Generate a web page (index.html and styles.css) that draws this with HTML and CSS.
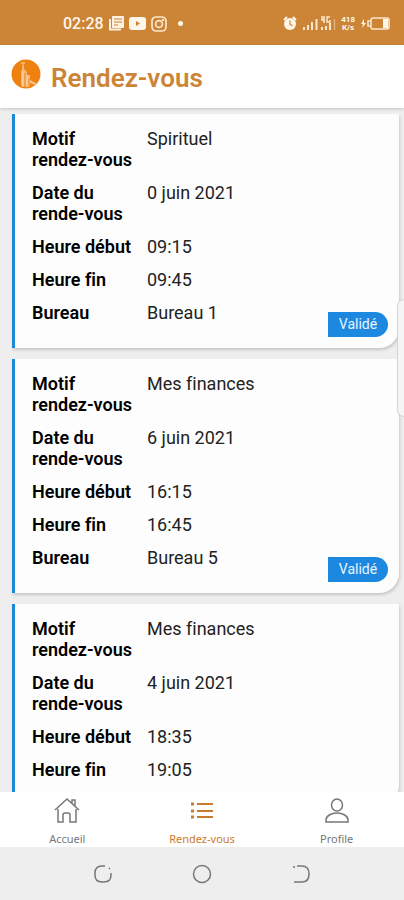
FILE: index.html
```
<!DOCTYPE html>
<html lang="fr">
<head>
<meta charset="utf-8">
<meta name="viewport" content="width=device-width, initial-scale=1">
<title>Rendez-vous</title>
<link rel="stylesheet" href="styles.css">
</head>
<body>
<div class="status-bar">
  <div class="status-group">
    <span class="clock">02:28</span>
    <svg width="15" height="15" viewBox="0 0 15 15" aria-hidden="true">
      <path d="M1 3v10.500h11" fill="none" stroke="#fff1df" stroke-width="2"/>
      <rect x="3" y="0" width="12" height="12" rx="1" fill="#fff1df"/>
      <path d="M5 3h8M5 6h8M5 9h4" stroke="#cc8436" stroke-width="1.200"/>
    </svg>
    <svg width="17" height="13" viewBox="0 0 17 13" aria-hidden="true">
      <rect width="17" height="13" rx="3" fill="#fff6ea"/>
      <path d="M7 4v5l4-2.500z" fill="#cc8436"/>
    </svg>
    <svg width="16" height="16" viewBox="0 0 16 16" fill="none" stroke="#fbe6cb" stroke-width="1.700" aria-hidden="true">
      <rect x="1" y="1" width="14" height="14" rx="4"/>
      <circle cx="8" cy="8" r="3.400"/>
      <circle cx="12" cy="4" r=".5"/>
    </svg>
    <span class="status-dot"></span>
  </div>
  <div class="status-group">
    <svg width="14" height="15" viewBox="0 0 14 15" aria-hidden="true">
      <circle cx="7" cy="8" r="6" fill="#fff6ea"/>
      <path d="M1 4l3-3M13 4l-3-3" stroke="#fff6ea" stroke-width="2"/>
      <path d="M7 4.500V8l2.500 2" fill="none" stroke="#cc8436" stroke-width="1.200"/>
    </svg>
    <svg width="34" height="18" viewBox="0 0 34 18" aria-hidden="true">
      <path d="M2 15v-3M6 15V10M10 15V7M14.500 15V4M20 15v-3M24 15v-4M28 15V8" stroke="#fbe6cb" stroke-width="2"/>
      <path d="M32.500 15V4" stroke="#e0b07a" stroke-width="1.500"/>
      <path d="M20 1v4h3M22 1v7M28 2h-3v5h3v-2" fill="none" stroke="#fbe6cb" stroke-width="1.500"/>
    </svg>
    <span class="net-speed"><span>418</span><span>K/s</span></span>
    <svg width="30" height="13" viewBox="0 0 30 13" aria-hidden="true">
      <path d="M4 2L1 7h2l-1 4 4-5H4z" fill="#fff6ea"/>
      <path d="M11 4H8v5h3" fill="none" stroke="#fbe6cb" stroke-width="1.500"/>
      <rect x="11" y="1" width="18" height="11" rx="2" fill="none" stroke="#fbe6cb" stroke-width="1.500"/>
      <rect x="23" y="2" width="5" height="9" fill="#fff6ea"/>
    </svg>
  </div>
</div>

<header class="app-header">
  <svg width="30" height="30" viewBox="0 0 30 30" aria-hidden="true">
    <circle cx="15" cy="15" r="14.500" fill="#ef8110"/>
    <path d="M10 27V13l1-3V7l1-4 1 4v3l3 3v3h3v5l6 4-1 1-5-2v4z" fill="#f4b778"/>
    <path d="M10 4h4M12 12v16M16 16v12M19 22l6 3" stroke="#fbd9ae" stroke-width="1"/>
    <path d="M14 14v14M18 20v8" stroke="#e98a2a" stroke-width="1"/>
  </svg>
  <h1>Rendez-vous</h1>
</header>

<main class="appointments">
  <article class="card">
    <dl class="details">
      <dt>Motif rendez-vous</dt><dd>Spirituel</dd>
      <dt>Date du rende-vous</dt><dd>0 juin 2021</dd>
      <dt>Heure début</dt><dd>09:15</dd>
      <dt>Heure fin</dt><dd>09:45</dd>
      <dt>Bureau</dt><dd>Bureau 1</dd>
    </dl>
    <span class="badge">Validé</span>
  </article>
  <article class="card">
    <dl class="details">
      <dt>Motif rendez-vous</dt><dd>Mes finances</dd>
      <dt>Date du rende-vous</dt><dd>6 juin 2021</dd>
      <dt>Heure début</dt><dd>16:15</dd>
      <dt>Heure fin</dt><dd>16:45</dd>
      <dt>Bureau</dt><dd>Bureau 5</dd>
    </dl>
    <span class="badge">Validé</span>
  </article>
  <article class="card">
    <dl class="details">
      <dt>Motif rendez-vous</dt><dd>Mes finances</dd>
      <dt>Date du rende-vous</dt><dd>4 juin 2021</dd>
      <dt>Heure début</dt><dd>18:35</dd>
      <dt>Heure fin</dt><dd>19:05</dd>
    </dl>
  </article>
</main>

<nav class="tab-bar">
  <a class="tab" href="#accueil">
    <svg width="28" height="28" viewBox="0 0 28 28" aria-hidden="true">
      <path d="M2 13L14 2l12 11M19 6V3h3v6M5 12v13h5v-7q0-2 2-2h3q2 0 2 2v7h6V12" stroke-width="1.500"/>
    </svg>
    <span>Accueil</span>
  </a>
  <a class="tab tab-active" href="#rendez-vous" aria-current="page">
    <svg width="28" height="28" viewBox="0 0 28 28" aria-hidden="true">
      <path d="M3 7h3M3 14h3M3 20h3" stroke-width="3"/>
      <path d="M9 7h16M9 14h16M9 20h16" stroke-width="2"/>
    </svg>
    <span>Rendez-vous</span>
  </a>
  <a class="tab" href="#profile">
    <svg width="28" height="28" viewBox="0 0 28 28" aria-hidden="true">
      <ellipse cx="14" cy="8" rx="5.500" ry="6" stroke-width="1.500"/>
      <path d="M3 25v-2c0-4 5-7 11-7s11 3 11 7v2z" stroke-width="1.500"/>
    </svg>
    <span>Profile</span>
  </a>
</nav>

<div class="system-bar">
  <button type="button" aria-label="Applications récentes">
    <svg width="20" height="20" viewBox="0 0 20 20" aria-hidden="true">
      <path d="M12 2H9Q2 2 2 9v2q0 7 7 7h2q7 0 7-7V9M16 4l1 1"/>
    </svg>
  </button>
  <button type="button" aria-label="Écran d’accueil">
    <svg width="20" height="20" viewBox="0 0 20 20" aria-hidden="true">
      <circle cx="10" cy="10" r="8.500"/>
    </svg>
  </button>
  <button type="button" aria-label="Retour">
    <svg width="20" height="20" viewBox="0 0 20 20" aria-hidden="true">
      <path d="M3 2v2M6 2h5q7 0 7 8t-7 8H3"/>
    </svg>
  </button>
</div>
<div class="edge-handle"></div>
</body>
</html>
```

FILE: styles.css
```
* {
  box-sizing: border-box;
}

body {
  position: relative;
  display: flex;
  flex-direction: column;
  height: 100vh;
  margin: 0;
  overflow: hidden;
  background: #eeeeee;
  color: #000;
  font-family: Roboto, "Liberation Sans", sans-serif;
  font-variant-ligatures: none;
}

.status-bar {
  display: flex;
  flex: none;
  align-items: center;
  justify-content: space-between;
  height: 45px;
  padding: 2px 14px 0 63px;
  background: #cc8436;
  color: #fff6ea;
}

.status-group {
  display: flex;
  align-items: center;
  gap: 5px;
}

.clock {
  font-size: 16px;
  font-weight: 500;
}

.status-dot {
  width: 5px;
  height: 5px;
  margin-left: 6px;
  border-radius: 50%;
  background: #fff6ea;
}

.net-speed {
  display: flex;
  flex-direction: column;
  font-size: 8px;
  font-weight: 700;
  line-height: 8px;
  text-align: center;
}

.app-header {
  display: flex;
  flex: none;
  align-items: center;
  gap: 10px;
  height: 63px;
  padding: 0 11px 5px;
  background: #fff;
  box-shadow: 0 1px 3px rgba(0, 0, 0, 0.18);
  z-index: 1;
}

.app-header h1 {
  margin: 8px 0 0;
  color: #cc8436;
  font-size: 26px;
  font-weight: 600;
  line-height: 30px;
}

.appointments {
  display: flex;
  flex: 1;
  flex-direction: column;
  gap: 11px;
  min-height: 0;
  padding: 6px 5px 0 12px;
  overflow: hidden;
}

.card {
  position: relative;
  flex: none;
  padding: 14px 16px 25px 17px;
  border-left: 3px solid #1c88d8;
  border-radius: 0 2px 20px 0;
  background: #fdfdfd;
  box-shadow: 1px 2px 3px rgba(0, 0, 0, 0.16);
}

.details {
  display: grid;
  grid-template-columns: 103px 1fr;
  gap: 12px;
  margin: 0;
  font-size: 18px;
  line-height: 21px;
}

.details dt {
  font-weight: 600;
}

.details dd {
  margin: 0;
  color: #222;
}

.badge {
  position: absolute;
  right: 11px;
  bottom: 11px;
  width: 60px;
  border-radius: 0 13px 13px 0;
  background: #1c88e0;
  color: #e9f5ff;
  font-size: 14px;
  line-height: 25px;
  text-align: center;
}

.tab-bar {
  display: grid;
  flex: none;
  grid-template-columns: repeat(3, 1fr);
  height: 55px;
  background: #fff;
  z-index: 1;
}

.tab {
  display: flex;
  flex-direction: column;
  align-items: center;
  gap: 7px;
  padding-top: 5px;
  color: #777;
  font-family: "Noto Sans", sans-serif;
  font-size: 11px;
  line-height: 14px;
  text-decoration: none;
}

.tab-active {
  color: #cc7a2c;
}

.tab svg,
.system-bar svg {
  display: block;
  fill: none;
  stroke: currentColor;
}

.system-bar {
  display: flex;
  flex: none;
  align-items: center;
  justify-content: center;
  gap: 79px;
  height: 53px;
  background: #eeeeee;
}

.system-bar button {
  padding: 0;
  border: 0;
  background: none;
  color: #777;
}

.system-bar svg {
  stroke-width: 1.5px;
}

.edge-handle {
  position: absolute;
  top: 299px;
  right: 0;
  width: 7px;
  height: 118px;
  border: 1px solid #d4d4d4;
  border-right: 0;
  border-radius: 7px 0 0 7px;
  background: #f5f5f5;
  z-index: 2;
}
```
